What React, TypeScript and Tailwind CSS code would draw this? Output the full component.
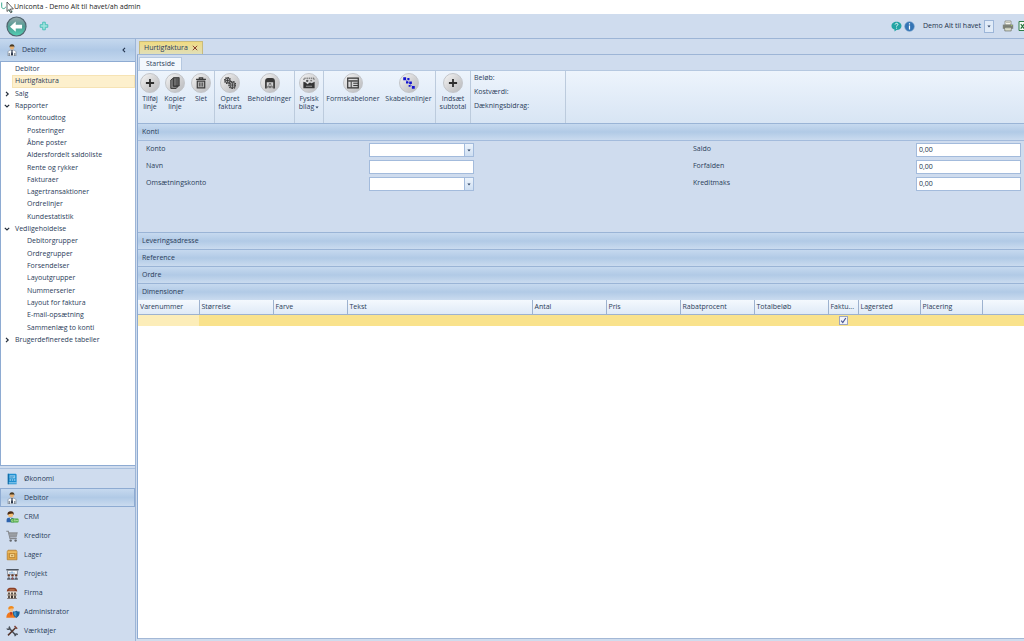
import { useState } from "react";
import type { ReactNode } from "react";

interface TreeNode {
  label: string;
  level: 0 | 1;
  state?: "open" | "closed";
}

interface Column {
  title: string;
  width: string;
}

const tree: TreeNode[] = [
  { label: "Debitor", level: 0 },
  { label: "Hurtigfaktura", level: 0 },
  { label: "Salg", level: 0, state: "closed" },
  { label: "Rapporter", level: 0, state: "open" },
  { label: "Kontoudtog", level: 1 },
  { label: "Posteringer", level: 1 },
  { label: "Åbne poster", level: 1 },
  { label: "Aldersfordelt saldoliste", level: 1 },
  { label: "Rente og rykker", level: 1 },
  { label: "Fakturaer", level: 1 },
  { label: "Lagertransaktioner", level: 1 },
  { label: "Ordrelinjer", level: 1 },
  { label: "Kundestatistik", level: 1 },
  { label: "Vedligeholdelse", level: 0, state: "open" },
  { label: "Debitorgrupper", level: 1 },
  { label: "Ordregrupper", level: 1 },
  { label: "Forsendelser", level: 1 },
  { label: "Layoutgrupper", level: 1 },
  { label: "Nummerserier", level: 1 },
  { label: "Layout for faktura", level: 1 },
  { label: "E-mail-opsætning", level: 1 },
  { label: "Sammenlæg to konti", level: 1 },
  { label: "Brugerdefinerede tabeller", level: 0, state: "closed" },
];

const columns: Column[] = [
  { title: "Varenummer", width: "w-[61px]" },
  { title: "Størrelse", width: "w-[74px]" },
  { title: "Farve", width: "w-[74px]" },
  { title: "Tekst", width: "w-[185px]" },
  { title: "Antal", width: "w-[74px]" },
  { title: "Pris", width: "w-[74px]" },
  { title: "Rabatprocent", width: "w-[74px]" },
  { title: "Totalbeløb", width: "w-[74px]" },
  { title: "Faktu...", width: "w-[30px]" },
  { title: "Lagersted", width: "w-[62px]" },
  { title: "Placering", width: "w-[62px]" },
];

/* ---------- small drawings ---------- */

function Caret() {
  return (
    <svg viewBox="0 0 4 3" className="h-[3px] w-1" aria-hidden="true">
      <path d="M.4.6h3.200L2 2.400z" fill="#2d4263" />
    </svg>
  );
}

function Expander({ open }: { open: boolean }) {
  return (
    <svg viewBox="0 0 6 6" className="h-1.5 w-1.5" fill="none" stroke="#222b38" strokeWidth="1.200" aria-hidden="true">
      <path d={open ? "M.8 1.800 3 4l2.200-2.200" : "M2 .8 4.200 3 2 5.200"} />
    </svg>
  );
}

function PersonIcon() {
  return (
    <svg viewBox="0 0 12 12" className="size-3" aria-hidden="true">
      <path d="M2 12V8.200C2 7 3 6.400 4.400 6.200h3.200c1.400.2 2.400.8 2.400 2V12z" fill="#f7f9fb" stroke="#75808e" strokeWidth=".6" />
      <circle cx="6" cy="3.600" r="2.100" fill="#e5b074" />
      <path d="M3.600 3.400C3.300 1.200 4.400.2 6 .2s2.700 1 2.400 3.200L7.800 2.400H4.300z" fill="#4a3a22" />
      <path d="M5.200 6.200h1.600l-.3 1.400.6 3L6 12l-1.100-1.400.6-3z" fill="#222f45" />
      <path d="M3.200 9v3M8.800 9v3" stroke="#3a4759" strokeWidth=".8" />
    </svg>
  );
}

function BookIcon() {
  return (
    <svg viewBox="0 0 12 12" className="size-3" aria-hidden="true">
      <path d="M1.800.8h8l.8.8v9.600H1.800z" fill="#1f8fd0" />
      <path d="M1.800.8h1v10.400h-1z" fill="#0f659d" />
      <path d="M3.600 2.200h5.600v3.200H3.600z" fill="#8fcdf0" />
      <path d="M4.200 3.300h4M4.200 4.400h3" stroke="#267cb4" strokeWidth=".5" />
      <path d="M3.600 6.600h1.400v1H3.600zM5.800 6.600h1.400v1H5.800zM8 6.600h1.400v1H8zM2.800 9.600h7.800v.7H2.800z" fill="#cbe9f9" />
    </svg>
  );
}

function CrmIcon() {
  return (
    <svg viewBox="0 0 13 12" className="h-3 w-[13px]" aria-hidden="true">
      <circle cx="4.600" cy="3.800" r="2.500" fill="#f3bd74" />
      <path d="M1.600 4C1 1.700 2.400.3 4.800.3S8.200 1.700 7.600 4L6.400 2.600 3.400 3z" fill="#4a2a14" />
      <path d="M.6 11.200V9c0-1.600 1.700-2.400 3.800-2.400S8 7.400 8 9v2.200z" fill="#2c62ad" />
      <path d="m3.600 6.800 1 1.600 1-1.600z" fill="#f4f6f8" />
      <rect x="4.600" y="7.600" width="8" height="3.900" rx=".9" fill="#49a83c" />
      <path d="M7.200 8.800H5.700v1.500h1.500M8.200 10.500V8.800h1v1.700M10.200 10.500V8.800l.8.9.8-.9v1.700" stroke="#e8f7e2" strokeWidth=".5" fill="none" />
    </svg>
  );
}

function CartIcon() {
  return (
    <svg viewBox="0 0 12 12" className="size-3" aria-hidden="true">
      <path d="M.3 1.300h2L4 8.600h6.800" fill="none" stroke="#85888d" strokeWidth="1.100" />
      <path d="M2.300 2.300h9.500l-1.300 5.300H3.600z" fill="#8d9095" />
      <path d="M5 2.300v5.300M7 2.300v5.300M9 2.300v5.300M3 4.800h8" stroke="#b4b8be" strokeWidth=".4" />
      <circle cx="4.700" cy="10.600" r="1.200" fill="#66696e" />
      <circle cx="9.600" cy="10.600" r="1.200" fill="#66696e" />
    </svg>
  );
}

function BoxIcon() {
  return (
    <svg viewBox="0 0 12 12" className="size-3" aria-hidden="true">
      <path d="M1.200 2.600 2 1.200h8.200l.8 1.400v8.200H1.200z" fill="#e0a545" stroke="#a7701e" strokeWidth=".6" />
      <path d="M1.500 3.100h9.300" stroke="#f8d487" strokeWidth=".8" />
      <rect x="3.400" y="4.800" width="5.400" height="3.800" fill="#f5d58f" stroke="#a7701e" strokeWidth=".6" />
      <path d="M5 6.700h2.200" stroke="#8a5b14" strokeWidth=".7" />
    </svg>
  );
}

function ProjectIcon() {
  return (
    <svg viewBox="0 0 13 12" className="h-3 w-[13px]" aria-hidden="true">
      <path d="M.3 1h12.400v1.400H.3z" fill="#4d5560" />
      <path d="M1.600 2.400h9.800v4H1.600z" fill="#f3f5f7" stroke="#59616d" strokeWidth=".6" />
      <path d="M4 5.500V4.200M6 5.500V3.500M8 5.500V4.500" stroke="#2d7abf" strokeWidth=".9" />
      <circle cx="2.800" cy="7.400" r="1.200" fill="#6b3a22" />
      <circle cx="6.500" cy="7.400" r="1.200" fill="#6b3a22" />
      <circle cx="10.200" cy="7.400" r="1.200" fill="#6b3a22" />
      <path d="M1 11.800c0-3.500 3.600-3.500 3.600 0zM4.700 11.800c0-3.500 3.600-3.500 3.600 0zM8.400 11.800c0-3.500 3.600-3.500 3.600 0z" fill="#59616d" />
      <path d="M6.500 9.600v1.800" stroke="#c93838" strokeWidth=".8" />
    </svg>
  );
}

function FirmIcon() {
  return (
    <svg viewBox="0 0 12 12" className="size-3" aria-hidden="true">
      <path d="M.8 4.600C.8 2 2.500.7 4 .7h4c1.500 0 3.200 1.300 3.200 3.900z" fill="#8b3f25" />
      <path d="M1.600 4.600h8.800v6.600H1.600z" fill="#efe3d2" />
      <path d="M2.200 5.400h1.600v2H2.200zM5.200 5.400h1.600v2H5.200zM8.200 5.400h1.600v2H8.200zM2.200 8.600h1.600v2.600H2.200zM5 8.600h2v2.600H5zM8.200 8.600h1.600v2.600H8.200z" fill="#38312e" />
      <path d="M1 7.700h10v.6H1zM1 11h10v.6H1z" fill="#4f3426" />
      <path d="M3.400 2.500h5.200v.9H3.400z" fill="#d49668" />
    </svg>
  );
}

function AdminIcon() {
  return (
    <svg viewBox="0 0 14 12" className="h-3 w-3.5" aria-hidden="true">
      <circle cx="5" cy="3.600" r="2.300" fill="#f4c084" />
      <path d="M2.300 3.400C2 1 3.500.1 5.200.1c1.900 0 3 1.200 2.700 2.500L5 2.400z" fill="#f18a1c" />
      <path d="M.3 11.800c0-3.700 1.700-5.600 4.600-5.600s4.500 1.900 4.600 5.600z" fill="#f0761b" />
      <path d="m3.900 6.300 1.100 4 1.300-4z" fill="#b53022" />
      <path d="M6.800 5.600c2 0 2.900-.4 3.600-.9.800.5 1.500.9 3.300.9 0 3.400-.9 5.100-3.400 6.300-2.500-1-3.500-2.900-3.500-6.300z" fill="#1a5f95" />
      <path d="M10.300 5.600v5.400c-1.600-.9-2.400-2.300-2.500-4.500 1.200 0 1.900-.3 2.500-.9z" fill="#3e97cf" />
    </svg>
  );
}

function ToolsIcon() {
  return (
    <svg viewBox="0 0 12 12" className="size-3" fill="none" aria-hidden="true">
      <path d="m2.600 2.600 7.400 7.800" stroke="#454b54" strokeWidth="1.500" />
      <path d="M9.600 2.800 2 10.400" stroke="#56362b" strokeWidth="1.500" />
      <path d="M.9 3.300c.3 1.100 1.600 1.500 2.400.7.900-.8.600-2.100-.4-2.600M9.200 11.300c-.5-1 .1-2.300 1.200-2.400.6 0 1 .3 1.300.7" stroke="#454b54" strokeWidth="1.100" />
      <path d="m8.500 1.100 2.700 2.600" stroke="#7c3e32" strokeWidth="1.400" />
    </svg>
  );
}

const modules: { label: string; icon: ReactNode }[] = [
  { label: "Økonomi", icon: <BookIcon /> },
  { label: "Debitor", icon: <PersonIcon /> },
  { label: "CRM", icon: <CrmIcon /> },
  { label: "Kreditor", icon: <CartIcon /> },
  { label: "Lager", icon: <BoxIcon /> },
  { label: "Projekt", icon: <ProjectIcon /> },
  { label: "Firma", icon: <FirmIcon /> },
  { label: "Administrator", icon: <AdminIcon /> },
  { label: "Værktøjer", icon: <ToolsIcon /> },
];

/* Ribbon glyphs, all on a 10 x 10 grid */
const plusGlyph = <path d="M5 1.600v6.800M1.600 5h6.800" stroke="#2e2e2e" strokeWidth="1.500" />;

const copyGlyph = (
  <>
    <path d="M3.700.5h4.800v7H3.700z" fill="#5a5a5a" stroke="#333" strokeWidth=".7" />
    <path d="M1.500 2.500 3.500 1v6.800h4L6 9.500H1.500z" fill="#8a8a8a" stroke="#333" strokeWidth=".8" />
    <path d="M5 1.200v6" stroke="#999" strokeWidth=".5" />
  </>
);

const trashGlyph = (
  <>
    <path d="M.9 1.900h8.200M3.600 1.700V.8h2.800v.9" stroke="#3a3a3a" strokeWidth="1" fill="none" />
    <path d="M1.900 3.400h6.200v5.700H1.900z" fill="#b5b5b5" stroke="#3a3a3a" strokeWidth="1" />
    <path d="M3.700 4.600v3.300M5 4.600v3.300M6.300 4.600v3.300" stroke="#3a3a3a" strokeWidth=".6" />
  </>
);

const gearsGlyph = (
  <g fill="none" stroke="#333">
    <circle cx="2.900" cy="2.900" r="2.500" strokeWidth="1" strokeDasharray="1.200 .7" />
    <circle cx="2.900" cy="2.900" r="1.800" strokeWidth=".7" />
    <circle cx="7" cy="6.700" r="2.900" strokeWidth="1" strokeDasharray="1.300 .7" />
    <circle cx="7" cy="6.700" r="2.100" strokeWidth=".7" />
    <path d="M2.900 1.300v3.200M1.300 2.900h3.200M7 4.600v4.200M4.900 6.700h4.200" strokeWidth=".7" />
  </g>
);

const stockGlyph = (
  <>
    <path d="M.9 9.500V3.300C.9 1.700 2 .8 3.300.8h3.400c1.300 0 2.400.9 2.400 2.500v6.200H7.700V4.300H2.300v5.200z" fill="#383838" />
    <path d="M3.200 9.300V7.500h1.300v1.800M5.500 9.300V7.500h1.300v1.800M4.300 6.600V5.500h1.400v1.100" fill="none" stroke="#444" strokeWidth=".6" />
  </>
);

const pictureGlyph = (
  <>
    <path d="M.3 9.300V4l2 .6L3.700 6l2-1.400 1.500.7 2.500-1.300v5.300z" fill="#343434" />
    <path d="M.8 2.500V1h8.400v1.500" stroke="#555" strokeWidth=".8" fill="none" strokeDasharray="1.200 .6" />
    <path d="M2.400 7.700h5.200" stroke="#aaa" strokeWidth=".7" />
    <circle cx="3.500" cy="3.200" r="1" fill="#555" />
    <circle cx="6.800" cy="3" r=".8" fill="#777" />
  </>
);

const formGlyph = (
  <g fill="none" stroke="#333">
    <path d="M.6.900h8.800v8.200H.6z" strokeWidth="1" />
    <path d="M1 3.300h8" strokeWidth="1.100" />
    <path d="M3.500 3.700v5" strokeWidth=".8" />
    <path d="M5.200 5.200h4M5.200 7.100h4" strokeWidth=".8" />
  </g>
);

const nodesGlyph = (
  <>
    <path d="M1.500 1.500 8.500 8.500" stroke="#6d6dd6" strokeWidth=".6" />
    <path d="M.2.3h2.400v2.400H.2zM3.600.9h1.800v1.800H3.600zM2.500 3.500h1.900v1.900H2.500zM5.200 3.700h2.200v2.200H5.200zM4.700 6.600h1.600v1.600H4.700zM7.400 7.400h2.400v2.400H7.400z" fill="#1414cf" />
  </>
);

function RibbonButton({
  glyph,
  lines,
  width,
  menu,
}: {
  glyph: ReactNode;
  lines: string[];
  width: string;
  menu?: boolean;
}) {
  return (
    <button type="button" className={`flex shrink-0 flex-col items-center pt-0.5 ${width}`}>
      <span className="mb-0.5 flex size-5 shrink-0 items-center justify-center rounded-full border border-[#c3c5c9] bg-linear-to-br from-[#f6f6f6] via-[#d4d4d5] to-[#b9babd]">
        <svg viewBox="0 0 10 10" className="size-3" aria-hidden="true">
          {glyph}
        </svg>
      </span>
      {lines.map((line, i) => (
        <span key={line} className="flex h-2 items-center gap-px whitespace-nowrap leading-2">
          {line}
          {menu && i === lines.length - 1 && <Caret />}
        </span>
      ))}
    </button>
  );
}

function RibbonGroup({ children }: { children: ReactNode }) {
  return (
    <div className="flex shrink-0 border-r border-[#bccbdd]">{children}</div>
  );
}

/* ---------- form ---------- */

function LookupField({ id, label }: { id: string; label: string }) {
  return (
    <div className="flex h-3.5">
      <label htmlFor={id} className="w-[223px] shrink-0 leading-[11px]">
        {label}
      </label>
      <div className="relative w-[105px] shrink-0">
        <select id={id} className="h-full w-full appearance-none border border-[#a3bbdc] bg-white px-0.5">
          <option value=""></option>
        </select>
        <span className="pointer-events-none absolute inset-y-0 right-0 flex w-2.5 items-center justify-center border border-[#a3bbdc] bg-linear-to-b from-[#edf4fc] to-[#cfdff2]">
          <Caret />
        </span>
      </div>
    </div>
  );
}

function TextField({ id, label, value }: { id: string; label: string; value?: string }) {
  return (
    <div className="flex h-3.5">
      <label htmlFor={id} className="w-[223px] shrink-0 leading-[11px]">
        {label}
      </label>
      <input
        id={id}
        type="text"
        defaultValue={value}
        className="w-[105px] shrink-0 border border-[#a3bbdc] bg-white px-0.5 text-[#22324a]"
      />
    </div>
  );
}

function SectionBar({ title }: { title: string }) {
  return (
    <button
      type="button"
      className="flex h-[17px] w-full shrink-0 items-center border-t border-[#9ab4d6] bg-linear-to-b from-[#c6d9ef] via-[#b1cae6] to-[#cadbef] pl-1 text-left"
    >
      {title}
    </button>
  );
}

/* ---------- page parts ---------- */

function TitleBar() {
  return (
    <div className="relative flex h-3.5 shrink-0 items-center bg-white pl-3.5 text-[#1c1c1c]">
      <svg viewBox="0 0 14 14" className="absolute top-0 left-0 size-3.5" fill="none" aria-hidden="true">
        <path d="M1.700 2.500v4.300c0 2.400 3.800 2.400 3.800 0M12.500 8.200c-1.800-1.200-3.700-.2-3.700 1.600s1.900 2.700 3.700 1.500" stroke="#3aa88f" strokeWidth="1" />
        <path d="M7 2v9.500l2.200-2.100 1.500 3.400 1.200-.6-1.500-3.200h3z" fill="#fff" stroke="#222" strokeWidth=".7" />
      </svg>
      Uniconta - Demo Alt til havet/ah admin
    </div>
  );
}

function Toolbar() {
  return (
    <div className="flex h-6 shrink-0 items-center overflow-hidden pl-1.5">
      <button type="button" aria-label="Tilbage" className="shrink-0">
        <svg viewBox="0 0 22 22" className="size-[21px]">
          <defs>
            <linearGradient id="back" x1="0" y1="0" x2="0" y2="1">
              <stop offset="0" stopColor="#9aa7ad" />
              <stop offset=".5" stopColor="#4f9c93" />
              <stop offset="1" stopColor="#53d3b5" />
            </linearGradient>
          </defs>
          <circle cx="11" cy="11" r="10" fill="url(#back)" stroke="#50646e" strokeWidth="1.200" />
          <path d="m4.200 11.200 6-5.400v3.400h6.600v4h-6.600v3.400z" fill="#fff" />
        </svg>
      </button>
      <button type="button" aria-label="Ny fane" className="ml-3 shrink-0">
        <svg viewBox="0 0 10 10" className="size-2.5">
          <path d="M3.700 1.200h2.600v2.500h2.500v2.600H6.300v2.500H3.700V6.300H1.200V3.700h2.500z" fill="#9de2dc" stroke="#43bdb5" strokeWidth=".9" />
        </svg>
      </button>
      <div className="ml-auto flex shrink-0 items-center">
        <button type="button" aria-label="Hjælp">
          <svg viewBox="0 0 11 11" className="size-[11px]">
            <path d="M5.500.7c2.900 0 5 1.900 5 4.200S8.400 9 5.500 9l-2 1.600V8.600C1.600 8 .5 6.600.5 4.900.5 2.600 2.600.7 5.500.7z" fill="#23a4a4" />
            <path d="M4.100 3.500c.2-1.700 3-1.500 2.800.1-.1.900-1.400.9-1.400 2M5.500 6.700v.9" stroke="#fff" strokeWidth=".9" fill="none" />
          </svg>
        </button>
        <button type="button" aria-label="Information" className="ml-0.5">
          <svg viewBox="0 0 11 11" className="size-[11px]">
            <circle cx="5.500" cy="5.500" r="4.800" fill="#3474b5" stroke="#6f9cc9" strokeWidth=".6" />
            <path d="M5.500 4.500v4M5.500 2.300v1.200" stroke="#fff" strokeWidth="1.200" />
          </svg>
        </button>
        <div className="relative ml-2">
          <select
            aria-label="Firma"
            className="h-[13px] w-[71px] appearance-none bg-transparent text-[#22324a]"
          >
            <option>Demo Alt til havet</option>
          </select>
          <span className="pointer-events-none absolute inset-y-0 right-0 flex w-2.5 items-center justify-center border border-[#9db6d8] bg-[#e0ebf8]">
            <Caret />
          </span>
        </div>
        <button type="button" aria-label="Udskriv" className="ml-2">
          <svg viewBox="0 0 12 12" className="size-3">
            <path d="M3 1h6v4H3z" fill="#f6f6ef" stroke="#75786f" strokeWidth=".7" />
            <path d="M.8 4.600h10.400v4.200H.8z" fill="#7f8379" />
            <path d="M2.800 7.300h6.400v3.600H2.800z" fill="#e9ebd9" stroke="#60645a" strokeWidth=".7" />
            <path d="M4 2.500h4M4 8.800h4" stroke="#9a9d8f" strokeWidth=".6" />
            <path d="M9 5.500h1.200" stroke="#a9d65c" strokeWidth=".8" />
          </svg>
        </button>
        <button type="button" aria-label="Excel" className="-mr-1.5 ml-1">
          <svg viewBox="0 0 12 12" className="size-3">
            <path d="M1 1.500h10v9H1z" fill="#f4fbf4" stroke="#2f7d46" strokeWidth="1" />
            <path d="m2.800 4 3.400 4.700M6.200 4 2.800 8.700" stroke="#1f7038" strokeWidth="1.200" />
            <path d="M7 2h4v3.500z" fill="#1d3c28" />
          </svg>
        </button>
      </div>
    </div>
  );
}

function Sidebar() {
  const [selected, setSelected] = useState("Hurtigfaktura");
  const [module, setModule] = useState("Debitor");

  return (
    <aside className="flex w-[136px] shrink-0 flex-col border-r border-[#9db5d6]">
      <header className="flex h-[23px] shrink-0 items-center border-b border-[#8eabd2] bg-linear-to-b from-[#c5d8ee] via-[#b0c9e6] to-[#c3d7ee] pr-2 pl-1.5">
        <PersonIcon />
        <h2 className="ml-1 flex-1">{module}</h2>
        <button type="button" aria-label="Skjul menu">
          <svg viewBox="0 0 6 6" className="h-1.5 w-1.5" fill="none" stroke="#1f2f49" strokeWidth="1.100">
            <path d="M4 .8 2 3l2 2.200" />
          </svg>
        </button>
      </header>

      <nav className="min-h-0 flex-1 overflow-hidden border-b border-l border-[#8eabd2] bg-white pt-px">
        <ul className="grid h-[283px] auto-rows-fr">
          {tree.map((node) => (
            <li key={node.label} className="flex items-center pl-[3px]">
              <span className="flex w-2 shrink-0">
                {node.state && <Expander open={node.state === "open"} />}
              </span>
              <a
                href="#"
                onClick={(e) => {
                  e.preventDefault();
                  setSelected(node.label);
                }}
                className={`flex h-full flex-1 items-center border whitespace-nowrap ${
                  node.level === 1 ? "pl-3.5" : "pl-0.5"
                } ${
                  node.label === selected
                    ? "border-[#f6e3b4] bg-[#fdf0cd]"
                    : "border-transparent"
                }`}
              >
                {node.label}
              </a>
            </li>
          ))}
        </ul>
      </nav>

      <ul className="mt-0.5 shrink-0 border-t border-[#a9c0de] pb-px">
        {modules.map(({ label, icon }) => (
          <li key={label}>
            <button
              type="button"
              onClick={() => setModule(label)}
              className={`flex h-[19px] w-full items-center border pl-[5px] ${
                label === module
                  ? "border-[#8eabd2] bg-linear-to-b from-[#c6d9ef] via-[#b1cae6] to-[#cadbef]"
                  : "border-transparent"
              }`}
            >
              <span className="flex w-[18px] shrink-0">{icon}</span>
              {label}
            </button>
          </li>
        ))}
      </ul>
    </aside>
  );
}

function Ribbon() {
  return (
    <div className="flex h-[52px] shrink-0 overflow-hidden bg-linear-to-b from-[#edf4fc] to-[#d8e5f4]">
      <RibbonGroup>
        <RibbonButton glyph={plusGlyph} lines={["Tilføj", "linje"]} width="w-6" />
        <RibbonButton glyph={copyGlyph} lines={["Kopier", "linje"]} width="w-[26px]" />
        <RibbonButton glyph={trashGlyph} lines={["Slet"]} width="w-[26px]" />
      </RibbonGroup>
      <RibbonGroup>
        <RibbonButton glyph={gearsGlyph} lines={["Opret", "faktura"]} width="w-[30px]" />
        <RibbonButton glyph={stockGlyph} lines={["Beholdninger"]} width="w-[49px]" />
      </RibbonGroup>
      <RibbonGroup>
        <RibbonButton glyph={pictureGlyph} lines={["Fysisk", "bilag"]} width="w-[28px]" menu />
      </RibbonGroup>
      <RibbonGroup>
        <RibbonButton glyph={formGlyph} lines={["Formskabeloner"]} width="w-[58px]" />
        <RibbonButton glyph={nodesGlyph} lines={["Skabelonlinjer"]} width="w-[53px]" />
      </RibbonGroup>
      <RibbonGroup>
        <RibbonButton glyph={plusGlyph} lines={["Indsæt", "subtotal"]} width="w-[34px]" />
      </RibbonGroup>
      <RibbonGroup>
        <dl className="w-[94px] pl-[3px] leading-3.5">
          <dt>Beløb:</dt>
          <dt>Kostværdi:</dt>
          <dt>Dækningsbidrag:</dt>
        </dl>
      </RibbonGroup>
    </div>
  );
}

function LinesGrid() {
  return (
    <div className="min-h-0 flex-1 overflow-hidden border-b border-[#a3b8d6] bg-white">
      <table className="w-full table-fixed border-collapse">
        <thead>
          <tr className="h-3.5 bg-linear-to-b from-[#f4f9fe] to-[#dfeaf7]">
            {columns.map((c) => (
              <th
                key={c.title}
                scope="col"
                className={`border-r border-b border-[#9db2cf] p-0 pl-0.5 text-left font-normal whitespace-nowrap ${c.width}`}
              >
                {c.title}
              </th>
            ))}
            <td className="border-b border-[#9db2cf]" />
          </tr>
        </thead>
        <tbody>
          <tr className="h-3 bg-[#f9e28c]">
            {columns.map((c, i) => (
              <td key={c.title} className={i === 0 ? "bg-[#fcedb9] p-0" : "p-0"}>
                {c.title === "Faktu..." && (
                  <span className="relative mx-auto block size-[9px]">
                    <input
                      type="checkbox"
                      defaultChecked
                      aria-label="Fakturer"
                      className="peer block size-[9px] appearance-none border border-[#9ca6c0] bg-[#f2f4fa]"
                    />
                    <svg
                      viewBox="0 0 9 9"
                      className="pointer-events-none absolute inset-0 hidden size-[9px] peer-checked:block"
                      fill="none"
                      stroke="#4a5590"
                      strokeWidth="1.200"
                    >
                      <path d="m2.200 4.600 1.600 2L6.800 2" />
                    </svg>
                  </span>
                )}
              </td>
            ))}
            <td className="p-0" />
          </tr>
        </tbody>
      </table>
    </div>
  );
}

export default function App() {
  return (
    <div className="flex h-screen flex-col overflow-hidden bg-[#cfdcee] font-['Open_Sans','Noto_Sans',sans-serif] text-[7px] leading-[10px] text-[#2a3c59]">
      <TitleBar />
      <Toolbar />
      <div className="flex min-h-0 flex-1 border-t border-[#9db5d6]">
        <Sidebar />
        <main className="ml-px flex min-w-0 flex-1 flex-col pb-0.5">
          <div className="flex h-4 shrink-0 items-end border-b border-[#9db5d6] pl-0.5">
            <div className="flex h-[13px] items-center border border-b-0 border-[#c9bb7d] bg-linear-to-b from-[#f0da80] to-[#e0dfb8] px-1">
              <button type="button">Hurtigfaktura</button>
              <button type="button" aria-label="Luk fane" className="ml-1">
                <svg viewBox="0 0 6 6" className="h-1.5 w-1.5" stroke="#8a3f2c" strokeWidth="1">
                  <path d="m.8.8 4.400 4.400M5.200.8.8 5.200" />
                </svg>
              </button>
            </div>
          </div>

          <div className="flex min-h-0 flex-1 flex-col border-l border-[#8eabd2]">
            <div className="flex h-4 shrink-0 items-end border-b border-[#b5c8e0] pl-px">
              <button
                type="button"
                className="h-[13px] border border-b-0 border-[#b5c8e0] bg-[#f3f8fd] px-1.5"
              >
                Startside
              </button>
            </div>
            <Ribbon />
            <SectionBar title="Konti" />
            <div className="grid h-[92px] shrink-0 grid-cols-[547px_1fr] overflow-hidden border-t border-[#a3bbdc] pt-0.5 pl-2">
              <div className="flex flex-col gap-[3px]">
                <LookupField id="konto" label="Konto" />
                <TextField id="navn" label="Navn" />
                <LookupField id="omsaetningskonto" label="Omsætningskonto" />
              </div>
              <div className="flex flex-col gap-[3px]">
                <TextField id="saldo" label="Saldo" value="0,00" />
                <TextField id="forfalden" label="Forfalden" value="0,00" />
                <TextField id="kreditmaks" label="Kreditmaks" value="0,00" />
              </div>
            </div>
            <SectionBar title="Leveringsadresse" />
            <SectionBar title="Reference" />
            <SectionBar title="Ordre" />
            <SectionBar title="Dimensioner" />
            <LinesGrid />
          </div>
        </main>
      </div>
    </div>
  );
}
